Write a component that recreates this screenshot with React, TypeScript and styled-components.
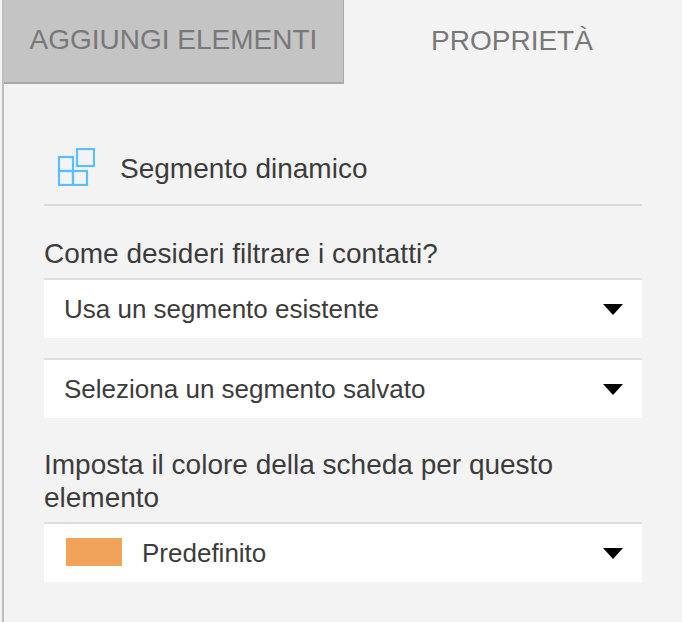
import * as React from 'react'
import styled, { createGlobalStyle } from 'styled-components'

const GlobalStyle = createGlobalStyle`
  html, body {
    margin: 0;
    padding: 0;
    height: 100%;
    background: #f3f3f3;
    overflow: hidden;
  }
  * {
    box-sizing: border-box;
  }
`

const Panel = styled.div`
  width: 680px;
  height: 622px;
  margin-left: 2px;
  border-left: 2px solid #bdbdbd;
  font-family: 'Liberation Sans', Arial, sans-serif;
  color: #3c3c3c;
`

const Tabs = styled.div`
  display: flex;
  height: 84px;
`

const Tab = styled.div<{ $active?: boolean }>`
  height: 84px;
  width: ${({ $active }) => ($active ? '340px' : '336px')};
  padding-bottom: 2px;
  display: flex;
  align-items: center;
  justify-content: center;
  font-size: 28px;
  color: #787878;
  background: ${({ $active }) => ($active ? '#c4c4c4' : 'transparent')};
  border-bottom: ${({ $active }) => ($active ? '2px solid #a8a8a8' : 'none')};
  border-right: ${({ $active }) => ($active ? '1px solid #a8a8a8' : 'none')};
`

const Body = styled.div`
  padding-left: 40px;
  width: 638px;
`

const Heading = styled.div`
  height: 122px;
  margin-bottom: 1px;
  display: flex;
  align-items: center;
  gap: 25px;
  padding: 45px 0 0 13px;
  border-bottom: 2px solid #d9d9d9;
  font-size: 28px;
`

const HeadingText = styled.span`
  padding-top: 5px;
`

const Label = styled.div`
  font-size: 28px;
  line-height: 33px;
  padding-top: 30px;
  margin-bottom: 8px;
`

const Select = styled.div<{ $spaced?: boolean }>`
  height: 60px;
  display: flex;
  align-items: center;
  gap: 20px;
  padding: 0 21px 0 20px;
  margin-top: ${({ $spaced }) => ($spaced ? '20px' : '0')};
  background: #fff;
  border-top: 2px solid #dedede;
  font-size: 26px;
`

const SelectText = styled.span`
  flex: 1;
`

const Swatch = styled.span`
  width: 56px;
  height: 28px;
  margin: 0 0 2px 2px;
  background: #f2a35a;
`

const Caret = styled.span`
  width: 0;
  height: 0;
  margin-right: -2px;
  border-left: 10px solid transparent;
  border-right: 10px solid transparent;
  border-top: 11px solid #000;
`

const SegmentIcon = () => (
  <svg width="38" height="38" viewBox="0 0 38 38" fill="none" stroke="#5bbfff" strokeWidth="2.2">
    <rect x="20" y="1" width="17" height="17" />
    <rect x="2" y="9" width="14" height="14" />
    <rect x="2" y="23" width="14" height="14" />
    <rect x="16" y="23" width="14" height="14" />
  </svg>
)

const App = () => (
  <>
    <GlobalStyle />
    <Panel>
      <Tabs>
        <Tab $active>AGGIUNGI ELEMENTI</Tab>
        <Tab>PROPRIETÀ</Tab>
      </Tabs>
      <Body>
        <Heading>
          <SegmentIcon />
          <HeadingText>Segmento dinamico</HeadingText>
        </Heading>
        <Label>Come desideri filtrare i contatti?</Label>
        <Select>
          <SelectText>Usa un segmento esistente</SelectText>
          <Caret />
        </Select>
        <Select $spaced>
          <SelectText>Seleziona un segmento salvato</SelectText>
          <Caret />
        </Select>
        <Label>Imposta il colore della scheda per questo elemento</Label>
        <Select>
          <Swatch />
          <SelectText>Predefinito</SelectText>
          <Caret />
        </Select>
      </Body>
    </Panel>
  </>
)

export default App
